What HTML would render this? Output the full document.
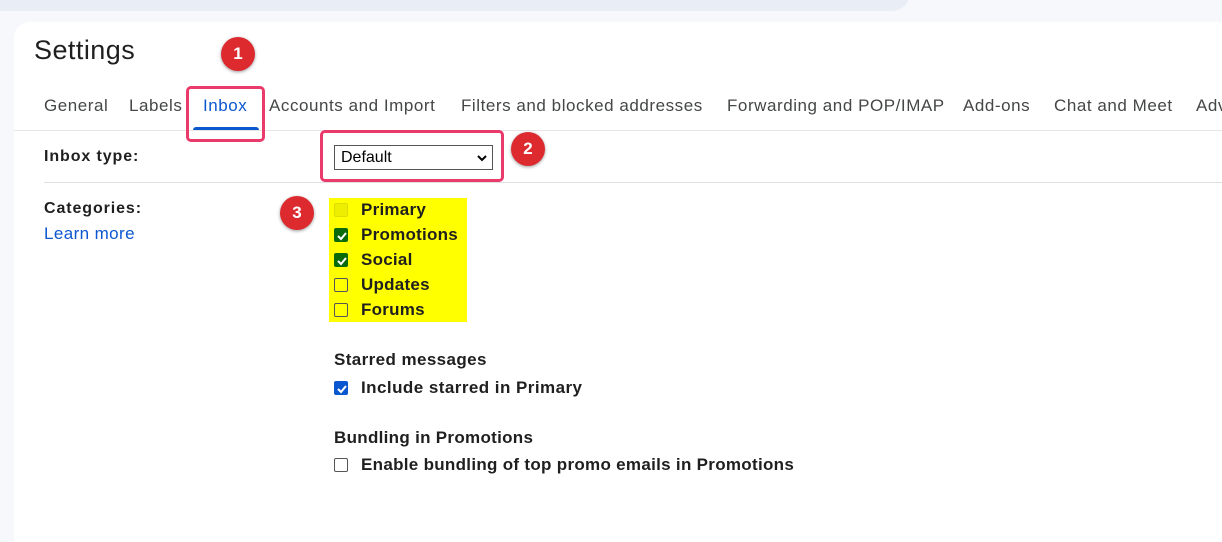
<!DOCTYPE html>
<html><head><meta charset="utf-8"><style>
*{margin:0;padding:0;box-sizing:border-box}
body{width:1222px;height:521px;background:#f6f8fc;font-family:"Liberation Sans",sans-serif;position:relative;overflow:hidden;color:#1f1f1f}
.a{position:absolute;white-space:nowrap}
.top{left:0;top:-20px;width:910px;height:31px;background:#e9eef6;border-radius:0 0 18px 0}
.card{left:14px;top:22px;width:1230px;height:520px;background:#fff;border-radius:16px 0 0 0}
.tab{top:96px;font-size:17px;color:#444746;letter-spacing:0.55px}
.lbl{font-size:16px;font-weight:bold;color:#1f1f1f;letter-spacing:0.9px}
.cb{width:14px;height:14px;border:1px solid #333;border-radius:2px;background:#fff}
.ck{background:#0b57d0;border-color:#0b57d0}
.g{background:#0a6b0a;border-color:#0a6b0a}
.ck svg,.g svg{position:absolute;left:1px;top:1px}
.t{font-size:17px;font-weight:bold;color:#1f1f1f;letter-spacing:0.25px}
.circ{width:34px;height:34px;border-radius:50%;background:#dc2a2f;color:#fff;font-weight:bold;font-size:17px;text-align:center;line-height:34px;box-shadow:0 1px 3px rgba(0,0,0,.4)}
.box{border:3px solid #ea3a6b;border-radius:5px}
</style></head><body>
<div class="a top"></div>
<div class="a card"></div>
<div class="a" style="left:34px;top:35px;font-size:27px;color:#1f1f1f;letter-spacing:0.45px">Settings</div>
<div class="a tab" style="left:44px">General</div>
<div class="a tab" style="left:129px">Labels</div>
<div class="a tab" style="left:203px;color:#0b57d0">Inbox</div>
<div class="a tab" style="left:269px">Accounts and Import</div>
<div class="a tab" style="left:461px">Filters and blocked addresses</div>
<div class="a tab" style="left:727px">Forwarding and POP/IMAP</div>
<div class="a tab" style="left:963px">Add-ons</div>
<div class="a tab" style="left:1054px">Chat and Meet</div>
<div class="a tab" style="left:1196px">Adv</div>
<div class="a" style="left:193px;top:127px;width:66px;height:3px;background:#0b57d0;border-radius:3px 3px 0 0"></div>
<div class="a" style="left:14px;top:130px;width:1210px;height:1px;background:#e6e6e6"></div>
<div class="a lbl" style="left:44px;top:148px">Inbox type:</div>
<div class="a" style="left:334px;top:145px;width:159px;height:25px;border:1px solid #555;background:#fff;font-size:16px;padding:3px 6px;color:#000">Default
<svg class="a" style="left:142px;top:8px" width="10" height="8" viewBox="0 0 10 8"><path d="M1 2l4 4 4-4" stroke="#000" stroke-width="2" fill="none"/></svg></div>
<div class="a" style="left:44px;top:182px;width:1180px;height:1px;background:#e0e0e0"></div>
<div class="a lbl" style="left:44px;top:200px">Categories:</div>
<div class="a" style="left:44px;top:224px;font-size:17px;color:#0b57d0;letter-spacing:0.4px">Learn more</div>
<div class="a" style="left:329px;top:198px;width:138px;height:124px;background:#ffff00"></div>
<div class="a cb" style="left:334px;top:203px;border-color:#dddd00;background:#eeee00"></div>
<div class="a cb g" style="left:334px;top:228px"><svg width="12" height="12" viewBox="0 0 12 12"><path d="M2 6l3 3 5-6" stroke="#fff" stroke-width="2" fill="none"/></svg></div>
<div class="a cb g" style="left:334px;top:253px"><svg width="12" height="12" viewBox="0 0 12 12"><path d="M2 6l3 3 5-6" stroke="#fff" stroke-width="2" fill="none"/></svg></div>
<div class="a cb" style="left:334px;top:278px;border-color:#555;background:#ffff00"></div>
<div class="a cb" style="left:334px;top:303px;border-color:#555;background:#ffff00"></div>
<div class="a t" style="left:361px;top:200px">Primary</div>
<div class="a t" style="left:361px;top:225px">Promotions</div>
<div class="a t" style="left:361px;top:250px">Social</div>
<div class="a t" style="left:361px;top:275px">Updates</div>
<div class="a t" style="left:361px;top:300px">Forums</div>
<div class="a lbl" style="left:334px;top:350px;font-size:17px;letter-spacing:0.4px">Starred messages</div>
<div class="a cb ck" style="left:334px;top:381px"><svg width="12" height="12" viewBox="0 0 12 12"><path d="M2 6l3 3 5-6" stroke="#fff" stroke-width="2" fill="none"/></svg></div>
<div class="a t" style="left:361px;top:378px;letter-spacing:0.45px">Include starred in Primary</div>
<div class="a lbl" style="left:334px;top:428px;font-size:17px;letter-spacing:0.3px">Bundling in Promotions</div>
<div class="a cb" style="left:334px;top:458px;border-color:#555"></div>
<div class="a t" style="left:361px;top:455px;letter-spacing:0.3px">Enable bundling of top promo emails in Promotions</div>
<div class="a box" style="left:186px;top:86px;width:79px;height:56px"></div>
<div class="a box" style="left:320px;top:130px;width:184px;height:52px"></div>
<div class="a circ" style="left:221px;top:37px">1</div>
<div class="a circ" style="left:511px;top:132px">2</div>
<div class="a circ" style="left:280px;top:196px">3</div>
</body></html>
